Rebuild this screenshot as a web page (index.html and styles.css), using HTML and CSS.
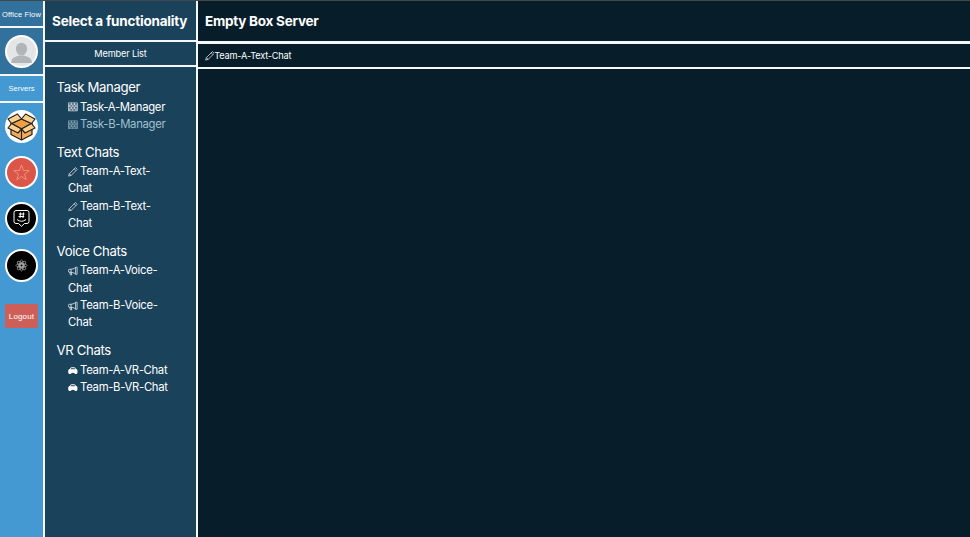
FILE: index.html
```html
<!DOCTYPE html>
<html lang="en">
<head>
<meta charset="utf-8">
<title>Office Flow</title>
<link rel="stylesheet" href="styles.css">
</head>
<body>
<svg class="defs" aria-hidden="true">
  <symbol id="bricks" viewBox="0 0 16 16"><path d="M.5 1.500h15v13H.5zM.5 4.800h15M.5 8h15M.5 11.200h15M5.500 1.500v3.300M10.500 1.500v3.300M3 4.800V8M8 4.800V8M13 4.800V8M5.500 8v3.200M10.500 8v3.200M3 11.200v3.300M8 11.200v3.300M13 11.200v3.300" fill="none" stroke="currentColor" stroke-width="1.100"/></symbol>
  <symbol id="pencil" viewBox="0 0 16 16"><path d="M12.200.9 15.100 3.800 5.100 13.800 1 15l1.200-4.100zM10 3l3 3M2.200 10.900l2.900 2.900" fill="none" stroke="currentColor" stroke-width="1.100" stroke-linejoin="round"/></symbol>
  <symbol id="megaphone" viewBox="0 0 16 16"><path d="M12.500 2.300C10 4.600 6.500 5.300 2 5.500Q.6 5.600.6 7v1.500Q.6 10 2 10c4.500.2 8 1 10.500 3.200zM12.500 2.300q2.500-1.400 2.500 0v11q0 1.400-2.500 0M5 5.200v5M3 10l.8 4.500h2.400L5.300 10.300" fill="none" stroke="currentColor" stroke-width="1.200" stroke-linejoin="round"/></symbol>
  <symbol id="visor" viewBox="0 0 16 16"><path d="M3 5Q3.800 2 6 2h4q2.200 0 3 3h1q1.800.8 1.800 4.200 0 4-2.500 4-1.800 0-2.800-1.400-2.500-1.400-5 0-1 1.400-2.800 1.400-2.500 0-2.500-4Q.2 5.800 2 5zM4.200 5.400h7.600l-.9-1.900H5.100z" fill="currentColor" fill-rule="evenodd"/></symbol>
</svg>
<div class="app">
  <nav class="rail">
    <div class="brand">Office Flow</div>
    <div class="profile">
      <svg class="badge" viewBox="0 0 33 33"><circle cx="16.500" cy="16.500" r="15.500" fill="#e3e5e7" stroke="#fff" stroke-width="2"/><ellipse cx="16.500" cy="14" rx="5.600" ry="6.300" fill="#afb5b8"/><path d="M6 28q.5-5.500 6-6.800l2-.7h5l2 .7q5.500 1.300 6 6.800z" fill="#afb5b8"/></svg>
    </div>
    <div class="rail-title">Servers</div>
    <div class="servers">
      <svg class="badge" viewBox="0 0 33 33"><circle cx="16.500" cy="16.500" r="16.500" fill="#fff"/><g stroke="#24211e" stroke-width="1.200" stroke-linejoin="round"><path d="M6 13v11.500l10.500 5.500L27 24.500V13l-10.500-4z" fill="#f3ad57"/><path d="M6.500 13.500 16.500 9l10 4.500-10 5.500z" fill="#ef9f43"/><path d="M6.500 13.500 3 9l9.500-5 4 5z" fill="#fbd08e"/><path d="M26.500 13.500 30 9l-9.500-5-4 5z" fill="#fbd08e"/><path d="M6.500 13.500l10 5.500-3.500 4-10-5z" fill="#fbd08e"/><path d="M26.500 13.500l-10 5.500 3.500 4 10-5z" fill="#fbd08e"/><path d="M16.500 19v11" fill="none"/></g></svg>
      <svg class="badge" viewBox="0 0 33 33"><circle cx="16.500" cy="16.500" r="15.500" fill="#db5647" stroke="#fff" stroke-width="2"/><path d="m16.500 9 2 5.500 5.700.1-4.600 3.600 1.600 5.500-4.700-3.200-4.700 3.200 1.600-5.500-4.600-3.600 5.700-.1z" fill="none" stroke="#f0a9a0" stroke-width=".7"/></svg>
      <svg class="badge" viewBox="0 0 33 33"><circle cx="16.500" cy="16.500" r="15.500" fill="#000" stroke="#fff" stroke-width="2"/><path d="M11 8.500h11q2 0 2 2v9q0 2-2 2h-2.500l-3 2.800-3-2.800H11q-2 0-2-2v-9q0-2 2-2zM12 17.500q4.500 3.500 9 0M15.500 10.500l-.5 5.500M18.500 10.500 18 16M13.800 12h5.700M13.500 14.500h5.700" fill="none" stroke="#fff" stroke-width="1"/></svg>
      <svg class="badge" viewBox="0 0 33 33"><circle cx="16.500" cy="16.500" r="15.500" fill="#000" stroke="#fff" stroke-width="2"/><g fill="none" stroke="#d0d0d0" stroke-width=".65"><circle cx="16.500" cy="16.500" r="1.300"/><ellipse cx="16.500" cy="16.500" rx="1.900" ry="5.500"/><ellipse cx="16.500" cy="16.500" rx="1.900" ry="5.500" transform="rotate(45 16.500 16.500)"/><ellipse cx="16.500" cy="16.500" rx="1.900" ry="5.500" transform="rotate(90 16.500 16.500)"/><ellipse cx="16.500" cy="16.500" rx="1.900" ry="5.500" transform="rotate(135 16.500 16.500)"/></g></svg>
    </div>
    <button class="logout">Logout</button>
  </nav>
  <aside class="panel">
    <h1 class="heading panel-heading">Select a functionality</h1>
    <div class="members">Member List</div>
    <div class="groups">
      <section>
        <h2>Task Manager</h2>
        <ul>
          <li><svg class="icon"><use href="#bricks"/></svg>Task-A-Manager</li>
          <li class="muted"><svg class="icon"><use href="#bricks"/></svg>Task-B-Manager</li>
        </ul>
      </section>
      <section>
        <h2>Text Chats</h2>
        <ul>
          <li><svg class="icon"><use href="#pencil"/></svg>Team-A-Text-<br>Chat</li>
          <li><svg class="icon"><use href="#pencil"/></svg>Team-B-Text-<br>Chat</li>
        </ul>
      </section>
      <section>
        <h2>Voice Chats</h2>
        <ul>
          <li><svg class="icon"><use href="#megaphone"/></svg>Team-A-Voice-<br>Chat</li>
          <li><svg class="icon"><use href="#megaphone"/></svg>Team-B-Voice-<br>Chat</li>
        </ul>
      </section>
      <section>
        <h2>VR Chats</h2>
        <ul>
          <li><svg class="icon"><use href="#visor"/></svg>Team-A-VR-Chat</li>
          <li><svg class="icon"><use href="#visor"/></svg>Team-B-VR-Chat</li>
        </ul>
      </section>
    </div>
  </aside>
  <main class="content">
    <h1 class="heading content-heading">Empty Box Server</h1>
    <div class="channel"><svg class="icon"><use href="#pencil"/></svg>Team-A-Text-Chat</div>
  </main>
</div>
</body>
</html>
```
FILE: styles.css
```css
* { box-sizing: border-box; }
body {
  margin: 0;
  font-family: Inter, "Liberation Sans", sans-serif;
  color: #fff;
}
.defs { display: none; }
.app {
  display: grid;
  grid-template-columns: 45px 153px 1fr;
  height: 537px;
  border-top: 1px solid #42474a;
  overflow: hidden;
}
.rail {
  background: #4499d2;
  border-right: 2px solid #f4f8fa;
  font-family: "Liberation Sans", sans-serif;
  font-size: 7.5px;
  text-align: center;
  white-space: nowrap;
}
.brand, .profile, .rail-title {
  display: flex;
  align-items: center;
  justify-content: center;
  border-bottom: 2px solid #f4f8fa;
}
.brand { height: 27px; padding-top: 1px; background: #31719c; letter-spacing: 0.15px; }
.profile { height: 48px; background: #31719c; }
.rail-title { height: 27px; }
.badge { display: block; width: 33px; height: 33px; }
.servers {
  display: flex;
  flex-direction: column;
  align-items: center;
  gap: 13.4px;
  padding-top: 6.5px;
}
.logout {
  display: block;
  width: 33px;
  height: 24px;
  margin: 22.4px auto 0;
  padding: 1px 0 0;
  border: 0;
  border-radius: 2px;
  background: #ce5f58;
  color: #fff;
  font: 8px "Liberation Sans", sans-serif;
  letter-spacing: 0.15px;
}
.panel {
  background: #1a425b;
  border-right: 2px solid #f4f8fa;
}
.heading {
  display: flex;
  align-items: center;
  margin: 0;
  padding-left: 7px;
  font-size: 13.5px;
  font-weight: 700;
  letter-spacing: -0.2px;
  white-space: nowrap;
}
.panel-heading {
  height: 41px;
  border-bottom: 2px solid #f4f8fa;
}
.members {
  height: 25px;
  border-bottom: 2px solid #f4f8fa;
  font-size: 9.2px;
  line-height: 24px;
  letter-spacing: -0.15px;
  text-align: center;
}
.groups { padding: 11px 0 0 11.6px; }
section { margin-bottom: 9.6px; }
h2 {
  margin: 0;
  font-size: 13.2px;
  font-weight: 400;
  line-height: 18px;
  letter-spacing: -0.38px;
}
ul {
  margin: 0;
  padding: 2.5px 0 0 11.5px;
  list-style: none;
}
li {
  font-size: 11.3px;
  line-height: 17.3px;
  letter-spacing: -0.3px;
  white-space: nowrap;
}
.muted { color: #9fc0d0; }
.icon {
  width: 9.8px;
  height: 9.8px;
  margin-right: 2.2px;
  vertical-align: -1.7px;
}
.content { background: #071e2a; }
.content-heading {
  height: 43px;
  border-bottom: 3px solid #f4f8fa;
  letter-spacing: -0.25px;
}
.channel {
  height: 25px;
  padding-left: 6.5px;
  border-bottom: 2px solid #f4f8fa;
  font-size: 9.2px;
  line-height: 23px;
  letter-spacing: -0.2px;
}
.channel .icon { margin-right: 0; vertical-align: -2px; }
```
